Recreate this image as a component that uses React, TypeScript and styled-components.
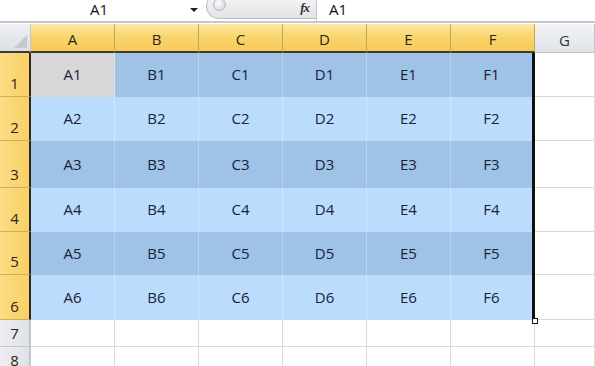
import React from "react";
import styled, { createGlobalStyle } from "styled-components";

const COLS = ["A", "B", "C", "D", "E", "F"];
const ROW_HEIGHTS = [44, 44, 47, 44, 43, 45];

const GlobalStyle = createGlobalStyle`
  html, body {
    margin: 0;
    padding: 0;
    background: #ffffff;
    overflow: hidden;
  }
  body {
    font-family: "Open Sans", "Noto Sans", Arial, sans-serif;
  }
`;

const Window = styled.div`
  width: 595px;
  height: 366px;
  overflow: hidden;
  background: #ffffff;
`;

const FormulaBar = styled.div`
  height: 21px;
  display: flex;
  align-items: flex-end;
  overflow: hidden;
  border-bottom: 2px solid #c7c8cf;
`;

const NameBox = styled.div`
  width: 206px;
  height: 21px;
  display: flex;
  align-items: center;
  padding-bottom: 4px;
  box-sizing: border-box;
  font-size: 15px;
  color: #111;
`;

const NameText = styled.span`
  flex: 1;
  text-align: center;
  padding-left: 8px;
`;

const DropArrow = styled.span`
  width: 0;
  height: 0;
  margin-right: 8px;
  margin-top: 2px;
  border-left: 4px solid transparent;
  border-right: 4px solid transparent;
  border-top: 4px solid #222;
`;

const Pill = styled.div`
  width: 110px;
  height: 26px;
  margin-bottom: 2px;
  box-sizing: border-box;
  border: 1px solid #b9bcc2;
  border-right: none;
  border-radius: 13px 0 0 13px;
  background: linear-gradient(#f7f7f7, #e2e3e6);
  display: flex;
  align-items: center;
  justify-content: space-between;
  padding: 0 7px 0 6px;
`;

const Knob = styled.span`
  width: 11px;
  height: 11px;
  margin-top: -4px;
  border-radius: 50%;
  background: radial-gradient(circle at 40% 40%, #ffffff, #c9cbd0);
  border: 1px solid #b4b7bd;
`;

const Fx = styled.span`
  font-family: "Liberation Serif", "DejaVu Serif", serif;
  font-style: italic;
  font-weight: bold;
  font-size: 13px;
  line-height: 13px;
  color: #333;
  margin-top: 3px;
  letter-spacing: -1px;
`;

const FormulaInput = styled.div`
  flex: 1;
  height: 21px;
  display: flex;
  align-items: center;
  padding: 0 0 4px 12px;
  box-sizing: border-box;
  border-left: 1px solid #c4c6cc;
  font-size: 15px;
  color: #111;
`;

const Grid = styled.div`
  margin-top: 1px;
  display: grid;
  grid-template-columns: 31px repeat(6, 84px) 1fr;
  grid-template-rows: 29px ${ROW_HEIGHTS.map((h) => `${h}px`).join(" ")} 27px 27px;
`;

const Corner = styled.div`
  background: linear-gradient(#eef0f3, #dcdfe4);
  border-right: 1px solid #c3c7cd;
  border-bottom: 2px solid #3f3a30;
  display: flex;
  align-items: flex-end;
  justify-content: flex-end;
  padding: 0 3px 3px 0;
`;

const CornerTriangle = styled.span`
  width: 0;
  height: 0;
  border-left: 13px solid transparent;
  border-bottom: 13px solid #c5c8cd;
`;

const ColHead = styled.div<{ $active?: boolean }>`
  display: flex;
  align-items: center;
  justify-content: center;
  padding-top: 3px;
  font-size: 15px;
  color: ${(p) => (p.$active ? "#2c2614" : "#333")};
  background: ${(p) =>
    p.$active
      ? "linear-gradient(#fde7a4, #f9d46c 50%, #f6ca58)"
      : "linear-gradient(#f2f4f7, #dfe2e7)"};
  border-right: 1px solid ${(p) => (p.$active ? "#c9a64d" : "#c3c7cd")};
  border-bottom: ${(p) => (p.$active ? "2px solid #3f3a30" : "1px solid #c3c7cd")};
`;

const RowHead = styled.div<{ $active?: boolean }>`
  display: flex;
  align-items: flex-end;
  justify-content: center;
  padding-bottom: 3px;
  box-sizing: border-box;
  font-size: 15px;
  color: #2c2614;
  background: ${(p) =>
    p.$active ? "linear-gradient(90deg, #fcdc86, #f8d064)" : "linear-gradient(90deg, #eceef2, #dfe2e7)"};
  border-right: 2px solid ${(p) => (p.$active ? "#2e2a22" : "#c3c7cd")};
  border-bottom: 1px solid ${(p) => (p.$active ? "#d1ad56" : "#c3c7cd")};
`;

const Cell = styled.div<{ $tone: "dark" | "light" | "active" | "empty"; $edge?: boolean }>`
  position: relative;
  display: flex;
  align-items: center;
  justify-content: center;
  padding-bottom: 2px;
  box-sizing: border-box;
  font-size: 15px;
  color: #18223a;
  background: ${(p) =>
    p.$tone === "dark"
      ? "#9fc2e7"
      : p.$tone === "light"
      ? "#bbdcfc"
      : p.$tone === "active"
      ? "#d7d7d8"
      : "#ffffff"};
  border-right: ${(p) =>
    p.$edge
      ? "3px solid #111"
      : p.$tone === "empty"
      ? "1px solid #dadada"
      : "1px solid rgba(255,255,255,0.28)"};
  border-bottom: ${(p) => (p.$tone === "empty" ? "1px solid #dadada" : "none")};
`;

const FillHandle = styled.span`
  position: absolute;
  right: -6px;
  bottom: -4px;
  width: 4px;
  height: 4px;
  background: #fff;
  border: 1px solid #111;
  z-index: 2;
`;

const EmptyCell = styled.div`
  border-right: 1px solid #dadada;
  border-bottom: 1px solid #dadada;
`;

export default function App() {
  return (
    <Window>
      <GlobalStyle />
      <FormulaBar>
        <NameBox>
          <NameText>A1</NameText>
          <DropArrow />
        </NameBox>
        <Pill>
          <Knob />
          <Fx>fx</Fx>
        </Pill>
        <FormulaInput>A1</FormulaInput>
      </FormulaBar>
      <Grid>
        <Corner>
          <CornerTriangle />
        </Corner>
        {COLS.map((c) => (
          <ColHead key={c} $active>
            {c}
          </ColHead>
        ))}
        <ColHead>G</ColHead>

        {ROW_HEIGHTS.map((_, r) => (
          <React.Fragment key={r}>
            <RowHead $active>{r + 1}</RowHead>
            {COLS.map((c, ci) => {
              const tone = r === 0 && ci === 0 ? "active" : r % 2 === 0 ? "dark" : "light";
              const last = ci === COLS.length - 1;
              return (
                <Cell key={c} $tone={tone} $edge={last}>
                  {`${c}${r + 1}`}
                  {last && r === ROW_HEIGHTS.length - 1 && <FillHandle />}
                </Cell>
              );
            })}
            <EmptyCell />
          </React.Fragment>
        ))}

        {[7, 8].map((n) => (
          <React.Fragment key={n}>
            <RowHead>{n}</RowHead>
            {COLS.map((c) => (
              <Cell key={c} $tone="empty" />
            ))}
            <EmptyCell />
          </React.Fragment>
        ))}
      </Grid>
    </Window>
  );
}
